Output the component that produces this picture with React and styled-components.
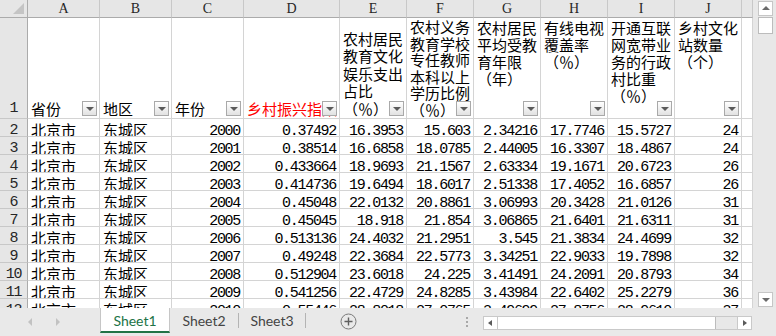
import React from "react";
import styled, { createGlobalStyle } from "styled-components";

const CJK = `"Noto Sans CJK SC", "Noto Sans", sans-serif`;
const MONO = `"Liberation Mono", "DejaVu Sans Mono", monospace`;

const GlobalStyle = createGlobalStyle`
  * { box-sizing: border-box; }
  html, body { margin: 0; padding: 0; background: #fff; overflow: hidden; }
`;

const Window = styled.div`
  width: 776px;
  height: 336px;
  display: flex;
  flex-direction: column;
  background: #fff;
  overflow: hidden;
`;

const Main = styled.div`
  display: flex;
  height: 308px;
`;

const Sheet = styled.div`
  width: 753px;
  height: 308px;
  overflow: hidden;
  display: grid;
  grid-template-columns: 28px 72px 72px 72px 96px repeat(6, 67px) 11px;
  grid-template-rows: 18px 101px repeat(11, 18px);
`;

const Corner = styled.div`
  position: relative;
  background: #e6e6e6;
  border-right: 1px solid #ababab;
  border-bottom: 1px solid #ababab;
  &::after {
    content: "";
    position: absolute;
    right: 3px;
    bottom: 3px;
    width: 11px;
    height: 11px;
    background: #c4c4c4;
    clip-path: polygon(100% 0, 100% 100%, 0 100%);
  }
`;

const ColHead = styled.div`
  background: #e6e6e6;
  border-right: 1px solid #c8c8c8;
  border-bottom: 1px solid #ababab;
  text-align: center;
  font-family: "Liberation Serif", serif;
  font-size: 14px;
  line-height: 17px;
  color: #262626;
`;

const RowHead = styled.div`
  background: #e6e6e6;
  border-right: 1px solid #ababab;
  border-bottom: 1px solid #c8c8c8;
  overflow: hidden;
  text-align: center;
  padding-top: ${(p) => (p.$tall ? "83px" : "4px")};
  font-family: ${MONO};
  font-size: 15px;
  letter-spacing: -1.2px;
  line-height: 15px;
  color: #262626;
`;

const HeadCell = styled.div`
  position: relative;
  display: flex;
  flex-direction: column;
  justify-content: ${(p) => (p.$align === "top" ? "flex-start" : "flex-end")};
  padding: ${(p) => (p.$align === "top" ? "1px 3px 0" : "0 3px 1px")};
  border-right: 1px solid #d4d4d4;
  border-bottom: 1px solid #d4d4d4;
  overflow: hidden;
  font-family: ${CJK};
  font-size: 15px;
  line-height: ${(p) => p.$lh || 17}px;
  color: ${(p) => (p.$red ? "#ff0000" : "#000")};
  white-space: nowrap;
`;

const Line = styled.span`
  display: block;
`;

const Filter = styled.span`
  position: absolute;
  right: 2px;
  bottom: 2px;
  width: 15px;
  height: 15px;
  border: 1px solid #a9a9a9;
  background: linear-gradient(#ffffff, #e2e2e2);
  &::after {
    content: "";
    position: absolute;
    left: 3px;
    top: 5px;
    border-left: 4px solid transparent;
    border-right: 4px solid transparent;
    border-top: 4px solid #5a5a5a;
  }
`;

const Cell = styled.div`
  border-right: 1px solid #d4d4d4;
  border-bottom: 1px solid #d4d4d4;
  overflow: hidden;
  white-space: nowrap;
  color: #000;
  padding: ${(p) => (p.$num ? "5px 3px 0" : "2px 3px 0")};
  line-height: ${(p) => (p.$num ? "15px" : "17px")};
  text-align: ${(p) => (p.$num ? "right" : "left")};
  font-family: ${(p) => (p.$num ? MONO : CJK)};
  font-size: 15px;
  letter-spacing: ${(p) => (p.$num ? "-1.3px" : "0")};
`;

const VScroll = styled.div`
  width: 23px;
  height: 308px;
  background: #e8e8e8;
  display: flex;
  flex-direction: column;
  padding: 1px 0 1px 5px;
`;

const ScrollBtn = styled.div`
  position: relative;
  width: 15px;
  height: 15px;
  background: #fff;
  border: 1px solid #c6c6c6;
  &::after {
    content: "";
    position: absolute;
    left: 3px;
    top: ${(p) => (p.$dir === "up" ? "4px" : "5px")};
    border-left: 4px solid transparent;
    border-right: 4px solid transparent;
    ${(p) =>
      p.$dir === "up"
        ? "border-bottom: 4px solid #6a6a6a;"
        : "border-top: 4px solid #6a6a6a;"}
  }
`;

const VThumb = styled.div`
  width: 15px;
  height: 17px;
  margin-top: 1px;
  background: #fff;
  border: 1px solid #bcbcbc;
`;

const Fill = styled.div`
  flex: 1;
`;

const TabBar = styled.div`
  height: 28px;
  background: #e9e9e9;
  display: flex;
  align-items: center;
`;

const Nav = styled.div`
  width: 100px;
  display: flex;
  align-items: center;
  gap: 24px;
  padding-left: 28px;
`;

const NavArrow = styled.span`
  width: 0;
  height: 0;
  border-top: 4px solid transparent;
  border-bottom: 4px solid transparent;
  ${(p) =>
    p.$dir === "left"
      ? "border-right: 4px solid #c2c2c2;"
      : "border-left: 4px solid #c2c2c2;"}
`;

const Tab = styled.div`
  align-self: flex-start;
  width: ${(p) => p.$w}px;
  height: 25px;
  display: flex;
  align-items: center;
  justify-content: center;
  font-family: Lato, "Noto Sans", sans-serif;
  font-size: 14px;
  color: ${(p) => (p.$active ? "#217346" : "#444")};
  background: ${(p) => (p.$active ? "#fff" : "transparent")};
  border-left: ${(p) => (p.$active ? "1px solid #c6c6c6" : "none")};
  border-right: ${(p) => (p.$active ? "1px solid #c6c6c6" : "none")};
  border-bottom: ${(p) => (p.$active ? "2px solid #217346" : "none")};
  padding-top: ${(p) => (p.$active ? "2px" : "0")};
`;

const Divider = styled.span`
  width: 1px;
  height: 15px;
  background: #b4b4b4;
  margin-bottom: 3px;
`;

const AddWrap = styled.div`
  width: 84px;
  display: flex;
  justify-content: center;
  margin-bottom: 2px;
`;

const DotsWrap = styled.div`
  width: 93px;
  display: flex;
  flex-direction: column;
  align-items: flex-end;
  gap: 2px;
  padding-right: 15px;
`;

const Dot = styled.span`
  width: 2px;
  height: 2px;
  background: #a8a8a8;
`;

const HScroll = styled.div`
  width: 269px;
  height: 14px;
  display: flex;
  background: #e8e8e8;
  border: 1px solid #c9c9c9;
  margin-top: 2px;
`;

const HBtn = styled.div`
  position: relative;
  width: 14px;
  height: 100%;
  background: #fff;
  ${(p) => (p.$dir === "left" ? "border-right: 1px solid #c9c9c9;" : "border-left: 1px solid #c9c9c9;")}
  &::after {
    content: "";
    position: absolute;
    top: 3px;
    left: ${(p) => (p.$dir === "left" ? "4px" : "5px")};
    border-top: 3px solid transparent;
    border-bottom: 3px solid transparent;
    ${(p) =>
      p.$dir === "left"
        ? "border-right: 4px solid #5a5a5a;"
        : "border-left: 4px solid #5a5a5a;"}
  }
`;

const HThumb = styled.div`
  width: 218px;
  height: 100%;
  background: #fff;
  border-right: 1px solid #bcbcbc;
`;

const letters = ["A", "B", "C", "D", "E", "F", "G", "H", "I", "J", ""];

const headers = [
  { lines: ["省份"], align: "bottom" },
  { lines: ["地区"], align: "bottom" },
  { lines: ["年份"], align: "bottom" },
  { lines: ["乡村振兴指数"], align: "bottom", red: true },
  { lines: ["农村居民", "教育文化", "娱乐支出", "占比", "（％）"], align: "bottom", lh: 17.5 },
  { lines: ["农村义务", "教育学校", "专任教师", "本科以上", "学历比例", "（％）"], align: "top", lh: 16.6 },
  { lines: ["农村居民", "平均受教", "育年限", "（年）"], align: "top" },
  { lines: ["有线电视", "覆盖率", "（％）"], align: "top" },
  { lines: ["开通互联", "网宽带业", "务的行政", "村比重", "（％）"], align: "top" },
  { lines: ["乡村文化", "站数量", "（个）"], align: "top" },
];

const data = [
  ["2000", "0.37492", "16.3953", "15.603", "2.34216", "17.7746", "15.5727", "24"],
  ["2001", "0.38514", "16.6858", "18.0785", "2.44005", "16.3307", "18.4867", "24"],
  ["2002", "0.433664", "18.9693", "21.1567", "2.63334", "19.1671", "20.6723", "26"],
  ["2003", "0.414736", "19.6494", "18.6017", "2.51338", "17.4052", "16.6857", "26"],
  ["2004", "0.45048", "22.0132", "20.8861", "3.06993", "20.3428", "21.0126", "31"],
  ["2005", "0.45045", "18.918", "21.854", "3.06865", "21.6401", "21.6311", "31"],
  ["2006", "0.513136", "24.4032", "21.2951", "3.545", "21.3834", "24.4699", "32"],
  ["2007", "0.49248", "22.3684", "22.5773", "3.34251", "22.9033", "19.7898", "32"],
  ["2008", "0.512904", "23.6018", "24.225", "3.41491", "24.2091", "20.8793", "34"],
  ["2009", "0.541256", "22.4729", "24.8285", "3.43984", "22.6402", "25.2279", "36"],
  ["2010", "0.55446", "28.8018", "27.0765", "3.49699", "27.8756", "28.9610", "37"],
];

const PlusIcon = () => (
  <svg width="17" height="17" viewBox="0 0 17 17">
    <circle cx="8.5" cy="8.5" r="7.5" fill="none" stroke="#7a7a7a" strokeWidth="1" />
    <path d="M8.5 4.5v8M4.5 8.5h8" stroke="#5f5f5f" strokeWidth="1.4" />
  </svg>
);

export default function App() {
  return (
    <>
      <GlobalStyle />
      <Window>
        <Main>
          <Sheet>
            <Corner />
            {letters.map((l, i) => (
              <ColHead key={"c" + i}>{l}</ColHead>
            ))}

            <RowHead $tall>1</RowHead>
            {headers.map((h, i) => (
              <HeadCell key={"h" + i} $align={h.align} $red={h.red} $lh={h.lh}>
                {h.lines.map((t, j) => (
                  <Line key={j}>{t}</Line>
                ))}
                <Filter />
              </HeadCell>
            ))}
            <Cell />

            {data.map((row, r) => (
              <React.Fragment key={"r" + r}>
                <RowHead>{r + 2}</RowHead>
                <Cell>北京市</Cell>
                <Cell>东城区</Cell>
                {row.map((v, c) => (
                  <Cell key={c} $num>
                    {v}
                  </Cell>
                ))}
                <Cell />
              </React.Fragment>
            ))}
          </Sheet>
          <VScroll>
            <ScrollBtn $dir="up" />
            <VThumb />
            <Fill />
            <ScrollBtn $dir="down" />
          </VScroll>
        </Main>
        <TabBar>
          <Nav>
            <NavArrow $dir="left" />
            <NavArrow $dir="right" />
          </Nav>
          <Tab $w={70} $active>
            Sheet1
          </Tab>
          <Tab $w={68}>Sheet2</Tab>
          <Divider />
          <Tab $w={66}>Sheet3</Tab>
          <Divider />
          <AddWrap>
            <PlusIcon />
          </AddWrap>
          <DotsWrap>
            <Dot />
            <Dot />
            <Dot />
          </DotsWrap>
          <HScroll>
            <HBtn $dir="left" />
            <HThumb />
            <Fill />
            <HBtn $dir="right" />
          </HScroll>
        </TabBar>
      </Window>
    </>
  );
}
